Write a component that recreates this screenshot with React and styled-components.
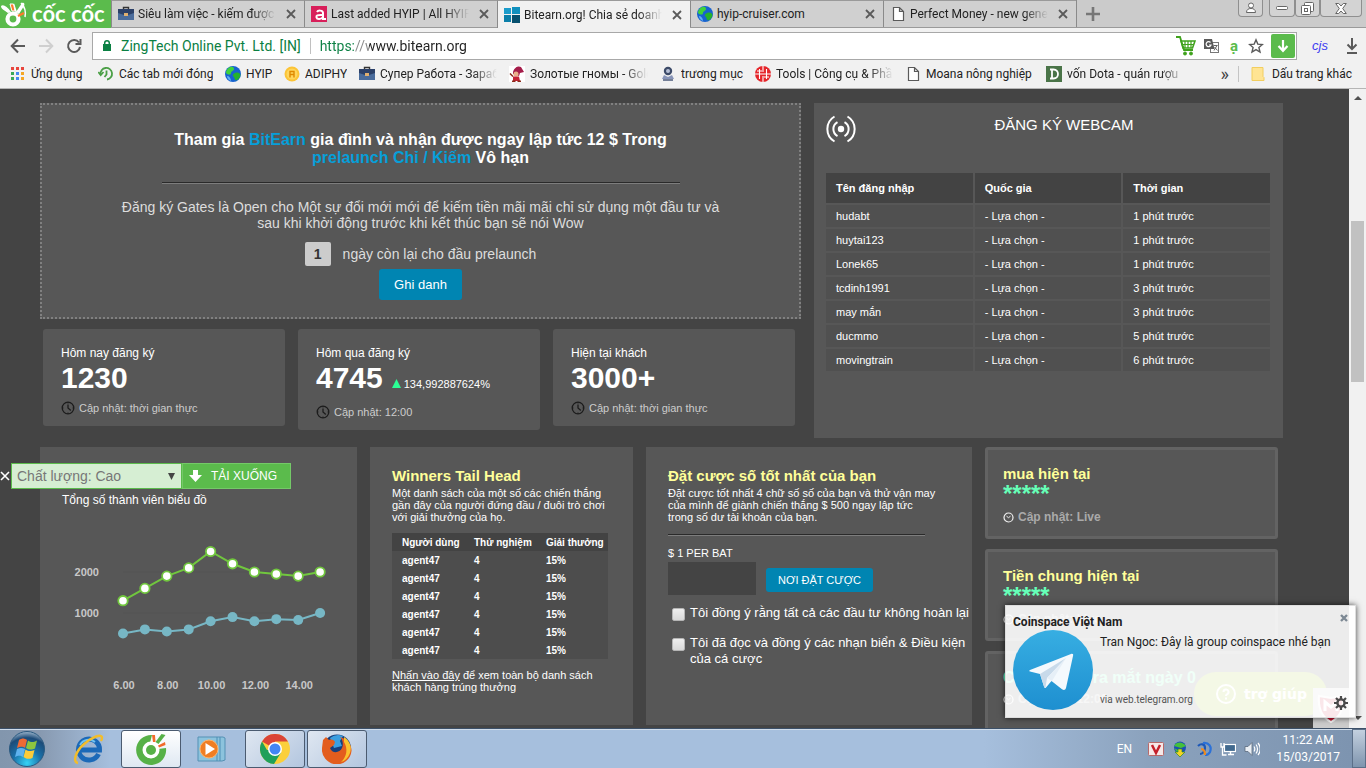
import React from 'react';
import styled, { createGlobalStyle } from 'styled-components';

const registrations = [
  ['hudabt', '1 phút trước'],
  ['huytai123', '1 phút trước'],
  ['Lonek65', '1 phút trước'],
  ['tcdinh1991', '3 phút trước'],
  ['may mắn', '3 phút trước'],
  ['ducmmo', '5 phút trước'],
  ['movingtrain', '6 phút trước'],
];

const winners = ['w1', 'w2', 'w3', 'w4', 'w5', 'w6'];

const totals = [1300, 1600, 1900, 2100, 2500, 2200, 2000, 1950, 1900, 2000];
const actives = [500, 600, 550, 600, 800, 900, 800, 850, 830, 1000];

/* ---------- icons ---------- */

const BriefcaseIcon = () => (
  <svg width="16" height="16" viewBox="0 0 16 16">
    <path d="M5.5 3V1.5h5V3" fill="none" stroke="#333" strokeWidth="1.4" />
    <rect x="0" y="3" width="16" height="11" fill="#4a6c9c" />
    <path d="M0 3h16v4l-6 2H6L0 7z" fill="#2b4068" />
    <rect x="6" y="7" width="4" height="3" fill="#e0b070" />
  </svg>
);

const HyipIcon = () => (
  <svg width="16" height="16" viewBox="0 0 16 16">
    <rect width="16" height="16" fill="#d81f5a" />
    <path d="M6 6c1-2 6-2 6 1v6h3M12 9c-6-.5-7 .8-6.500 2.500C6 13.500 10 13.500 12 11" fill="none" stroke="#fff" strokeWidth="2" />
  </svg>
);

const TilesIcon = () => (
  <svg width="16" height="16" viewBox="0 0 16 16">
    <path d="M0 1h7v6H0z" fill="#1b9ccb" />
    <path d="M8 0h8v7H8z" fill="#0f8fbd" />
    <path d="M0 8h7v7H0z" fill="#0b7fa9" />
    <path d="M8 8h8v8H8z" fill="#07506e" />
  </svg>
);

const GlobeIcon = () => (
  <svg width="16" height="16" viewBox="0 0 16 16">
    <circle cx="8" cy="8" r="8" fill="#1763d0" />
    <path d="M4 1.500C7 0 9 1 9 3S6 5 6 7s-3 2-5 0c0-2 1-4 3-5.500z" fill="#3fd23b" />
    <path d="M10 7c3-1 5 0 5.500 2-.5 3-2.500 5-4.500 5.500-2-1-1-3-2.500-4S8 8 10 7z" fill="#25b22c" />
    <path d="M2 10c2 0 4 2 4 5-2-.6-4-2.500-4-5z" fill="#5fb0f5" />
  </svg>
);

const PageIcon = () => (
  <svg width="16" height="16" viewBox="0 0 16 16">
    <path d="M3.500 1.500h6l4 4v9h-10zM9.500 1.500v4h4" fill="#fff" stroke="#5a5a5a" strokeWidth="1.200" />
  </svg>
);

const AppsIcon = () => (
  <svg width="16" height="16" viewBox="0 0 16 16">
    {['#e8453c', '#e8453c', '#e8453c', '#3aa757', '#4688f1', '#f5a623', '#3aa757', '#4688f1', '#f5a623'].map((c, i) => (
      <rect key={i} x={1 + (i % 3) * 5} y={1 + Math.floor(i / 3) * 5} width="3" height="3" fill={c} />
    ))}
  </svg>
);

const RecentIcon = () => (
  <svg width="16" height="16" viewBox="0 0 16 16" fill="none" stroke="#4a9f45" strokeWidth="1.800">
    <path d="M2.500 8.500A5.800 5.800 0 1 1 9 13.500" />
    <path d="M.3 6l2.400 3L5.500 6M8.500 4.500v4l-2 2.500" />
  </svg>
);

const CoinIcon = () => (
  <svg width="16" height="16" viewBox="0 0 16 16">
    <circle cx="8" cy="8" r="7.500" fill="#fcc436" />
    <circle cx="8" cy="8" r="5.500" fill="#ffd65c" />
    <path d="M6 11.500V5.500h4v6M6 8.500h4" fill="none" stroke="#e08a00" strokeWidth="1.400" />
  </svg>
);

const GnomeIcon = () => (
  <svg width="16" height="16" viewBox="0 0 16 16">
    <rect width="16" height="16" fill="#fff" />
    <path d="M4 6C6 0 10 0 12 1l3 5-4 1-1 3-6-2z" fill="#a51d4a" />
    <circle cx="7" cy="8" r="2.500" fill="#e9b08a" />
    <path d="M4 10.500h6l1 4.500H4z" fill="#c62336" />
    <path d="M1 7.500l3 3M3 15.200h3.500M8.500 15.200H12" stroke="#8a2a1a" strokeWidth="1.500" />
  </svg>
);

const StampIcon = () => (
  <svg width="16" height="16" viewBox="0 0 16 16">
    <circle cx="8" cy="5" r="4.200" fill="#3c4a68" />
    <circle cx="8" cy="5" r="2" fill="#b8c1d6" />
    <path d="M4 9l4 2 4-2 2 4H2z" fill="#8794b8" />
    <path d="M3 14h10" stroke="#4a5878" strokeWidth="1.500" />
  </svg>
);

const ToolsIcon = () => (
  <svg width="16" height="16" viewBox="0 0 16 16">
    <circle cx="8" cy="8" r="8" fill="#e5252a" />
    <path d="M0 8h16M8 0v6M8 10v6M4.500 3v10M11.500 3v10M2 5h5M9 11h5" stroke="#fff" strokeWidth="1.100" />
  </svg>
);

const DotaIcon = () => (
  <svg width="16" height="16" viewBox="0 0 16 16">
    <rect width="16" height="16" fill="#4a7448" />
    <path d="M4 3.500h3.500c6 0 6 9 0 9H4M6 3.500v9" fill="none" stroke="#fff" strokeWidth="1.800" />
  </svg>
);

const FolderIcon = () => (
  <svg width="14" height="16" viewBox="0 0 14 16">
    <path d="M1 1.500h11v9l1 1v3H1z" fill="#ffe493" stroke="#f2ce5f" />
  </svg>
);

const CocCocMark = () => (
  <svg width="28" height="28" viewBox="0 0 28 28">
    <path d="M13.500 4l3 9M21 3c4 4 5 9 4 14" stroke="#fff" strokeWidth="1.500" fill="none" />
    <circle cx="13" cy="19" r="5.500" fill="none" stroke="#fff" strokeWidth="4.200" />
    <path d="M8 13C4 10 1 9 1 6c2-2 6 0 10 6" fill="#fff" />
    <path d="M12 11L10 4l3.500 0 1.500 7z" fill="#ff7a2a" stroke="#fff" />
    <path d="M16 12l6-9c2-1 3 1 2 3l-5 8" fill="#fff" />
    <path d="M18 16l6-3" stroke="#ff7a2a" strokeWidth="2.200" />
  </svg>
);

const NavIcon = ({ d, color = '#5a5a5a' }) => (
  <svg width="16" height="16" viewBox="0 0 16 16" fill="none" stroke={color} strokeWidth="2">
    <path d={d} />
  </svg>
);

const LockIcon = () => (
  <svg width="10" height="14" viewBox="0 0 10 14">
    <rect x="1" y="5" width="8" height="7" fill="#0b8043" />
    <path d="M2.700 6V4a2.300 2.300 0 0 1 4.600 0v2" fill="none" stroke="#0b8043" strokeWidth="1.500" />
  </svg>
);

const CartIcon = () => (
  <svg width="20" height="20" viewBox="0 0 20 20" fill="none" stroke="#3fa21c">
    <path d="M0 1h4l4 13h9" strokeWidth="1.800" />
    <path d="M5 5h14l-2.500 7H7z" strokeWidth="1.600" />
    <path d="M6 8.500h12M9 5v7M12 5v7M15 5v7" strokeWidth="1.200" />
    <circle cx="9" cy="17.500" r="1.500" fill="#3fa21c" />
    <circle cx="15" cy="17.500" r="1.500" fill="#3fa21c" />
  </svg>
);

const TranslateIcon = () => (
  <svg width="16" height="16" viewBox="0 0 16 16">
    <rect x="6.500" y="4.500" width="8" height="10" fill="#fff" stroke="#777" />
    <path d="M0 1h8l2.500 10H0z" fill="#5a5a5a" />
    <path d="M6.500 4.500A2.500 2.500 0 1 0 7 7H5" fill="none" stroke="#fff" strokeWidth="1.200" />
    <path d="M9.500 7.500h4M10 12.500l3-5M10.500 9l3 3.500" stroke="#666" fill="none" />
  </svg>
);

const StarIcon = () => (
  <svg width="16" height="16" viewBox="0 0 16 16">
    <path d="M8 1.800l1.800 4.300 4.600.4-3.500 3 1.100 4.600-4-2.500-4 2.500 1.100-4.600-3.500-3 4.600-.4z" fill="none" stroke="#5a5a5a" strokeWidth="1.400" />
  </svg>
);

const DownArrow = ({ size = 14, color = '#fff' }) => (
  <svg width={size} height={size} viewBox="0 0 14 14">
    <path d="M7 1v10M2.500 7L7 11.800 11.500 7" fill="none" stroke={color} strokeWidth="2.200" />
  </svg>
);

const BroadcastIcon = () => (
  <svg width="30" height="28" viewBox="0 0 30 28" fill="none" stroke="#fff" strokeWidth="2">
    <circle cx="15" cy="14" r="3.200" fill="#fff" stroke="none" />
    <path d="M11.500 7a8 8 0 0 0 0 14M18.500 7a8 8 0 0 1 0 14" />
    <path d="M8.500 1.500a14.500 14.500 0 0 0 0 25M21.500 1.500a14.500 14.500 0 0 1 0 25" />
  </svg>
);

const ClockIcon = () => (
  <svg width="14" height="14" viewBox="0 0 14 14" fill="none" stroke="#1c1c1c">
    <circle cx="7" cy="7" r="5.800" strokeWidth="1.300" />
    <path d="M7 3.500V7l2.800 2.500" strokeWidth="1.300" />
    <path d="M7 1v1.500M7 11.500V13M1 7h1.500M11.500 7H13" />
  </svg>
);

const SmallClock = () => (
  <svg width="11" height="11" viewBox="0 0 11 11" fill="none" stroke="#f2f2f2">
    <circle cx="5.500" cy="5.500" r="4.500" strokeWidth="1.200" />
    <path d="M3.500 4.200l2 1.500 2-1.500" />
  </svg>
);

const TelegramIcon = () => (
  <svg width="80" height="80" viewBox="0 0 80 80">
    <defs>
      <linearGradient id="tg" x1="0" y1="0" x2="0" y2="1">
        <stop offset="0" stopColor="#37aee2" />
        <stop offset="1" stopColor="#1e8fd0" />
      </linearGradient>
    </defs>
    <circle cx="40" cy="40" r="40" fill="url(#tg)" />
    <path d="M17 40l41-16c2-.5 2.500.5 2 2l-7 32c-.6 2-2 2.400-4 1.300L38.500 51 33 57.500c-1 1-1.500.5-2-1l-4-12.500-10-2.500c-1-.5-1-1 0-1.500z" fill="#f4f9fd" />
    <path d="M27 44l26-16-19 20-1.500 9.500c-.8.300-1.200-.3-1.500-1z" fill="#c8daea" />
    <path d="M34 48l19-20-14 23z" fill="#e6eff7" />
  </svg>
);

const GearIcon = () => (
  <svg width="14" height="14" viewBox="0 0 14 14" stroke="#4a4a4a">
    <circle cx="7" cy="7" r="3.600" fill="none" strokeWidth="2.400" />
    <path d="M7 0v3M7 11v3M0 7h3M11 7h3M2 2l2 2M10 10l2 2M12 2l-2 2M4 10l-2 2" strokeWidth="2.200" />
  </svg>
);

const ShieldIcon = () => (
  <svg width="28" height="30" viewBox="0 0 28 30">
    <path d="M2 3l12 2 12-2c1 12-3 21-12 26C5 24 1 15 2 3z" fill="#c8102e" stroke="#f5f5f5" strokeWidth="2" />
    <path d="M8 18V9l6 5 6-5v9" fill="none" stroke="#fff" strokeWidth="3" />
  </svg>
);

const StartOrb = () => (
  <svg width="36" height="36" viewBox="0 0 36 36">
    <defs>
      <radialGradient id="orb" cx="0.5" cy="0.9" r="0.9">
        <stop offset="0" stopColor="#35d3f5" />
        <stop offset="0.45" stopColor="#1a70a8" />
        <stop offset="0.8" stopColor="#1c4b78" />
        <stop offset="1" stopColor="#9db6cc" />
      </radialGradient>
    </defs>
    <circle cx="18" cy="18" r="17.500" fill="url(#orb)" stroke="#2b5a80" />
    <path d="M10 9c3-2 5-2 8 0l-2 8c-3-2-5-1-8 0z" fill="#ee6a35" />
    <path d="M19 9.500c3 2 5 2 9 0l-2 8c-4 2-6 1-9-.5z" fill="#8cc540" />
    <path d="M8 18c3-1.500 5-1.500 8 0l-2 8c-3-2-5-1.500-8 0z" fill="#5fb2ee" />
    <path d="M16.500 18.500c3 2 5 2 9 .5l-2 8c-4 1.500-6 1-9-1z" fill="#fccc3a" />
  </svg>
);

const IeIcon = () => (
  <svg width="32" height="32" viewBox="0 0 32 32" fill="none">
    <path d="M26.500 21A10.500 10.500 0 1 1 27.500 17H9" stroke="#1c69b8" strokeWidth="5" />
    <path d="M8 12a10 10 0 0 1 15-3" stroke="#6fc2f2" strokeWidth="2" />
    <path d="M6 30C0 29 4 18 12 11S30 0 30 5c0 1-.5 2-1 3" stroke="#f2bd2b" strokeWidth="2.400" />
  </svg>
);

const CocCocIcon = () => (
  <svg width="32" height="32" viewBox="0 0 32 32">
    <path d="M17 2A15 15 0 1 0 31 15l-8 1a7.500 7.500 0 1 1-8-6z" fill="#57b147" />
    <circle cx="16" cy="17" r="8.500" fill="#fff" />
    <path d="M16 17L26 6v8z" fill="#fff" />
    <circle cx="16" cy="17" r="5" fill="#57b147" />
    <path d="M20.500 9l6-8 4 1-7 9z" fill="#57b147" />
    <path d="M18 9l-1-7 3 0 .5 7zM23 12.500l7-3.500.5 3-6.500 2.500z" fill="#f26a2a" />
  </svg>
);

const PlayerIcon = () => (
  <svg width="32" height="28" viewBox="0 0 32 28">
    <path d="M1 2h25l2 1v22l-3 1H1z" fill="#8cc3dd" stroke="#5591b4" />
    <path d="M20 2v24M23 2v24" stroke="#4e8fb5" />
    <circle cx="12" cy="14" r="9" fill="#f07e23" stroke="#ffb46a" />
    <path d="M8.500 8l9.500 6-9.500 6z" fill="#fff" />
  </svg>
);

const ChromeIcon = () => (
  <svg width="30" height="30" viewBox="0 0 30 30">
    <circle cx="15" cy="15" r="15" fill="#fbcf3b" />
    <path d="M15 15L2 7.500A15 15 0 0 1 28 7.500H15z" fill="#da4437" />
    <path d="M2 7.500A15 15 0 0 0 14 30l7-11.500-6-3.500L7 16z" fill="#1fa05a" />
    <circle cx="15" cy="15" r="7" fill="#fff" />
    <circle cx="15" cy="15" r="5.500" fill="#4285f4" />
  </svg>
);

const FirefoxIcon = () => (
  <svg width="30" height="30" viewBox="0 0 30 30">
    <circle cx="15" cy="14.500" r="14" fill="#173f7d" />
    <path d="M8 4a13 13 0 0 1 13-2l-3 5 2 5-8 2z" fill="#3b9fe0" />
    <path d="M1 6l3-3 3 3c3-1 5 0 6 2l-1 3-4 3c2 6 10 5 12 0 2-5 0-9-2-11 8 2 12 9 11.500 14A14.500 14.500 0 0 1 0 14z" fill="#e35d1e" />
    <path d="M22 3c6 4 8 10 6 16-2 5-5 8-9 9 6-5 7-14 3-20z" fill="#fbc22e" />
  </svg>
);

const V3Icon = () => (
  <svg width="16" height="16" viewBox="0 0 16 16">
    <rect x="0.500" y="1.500" width="15" height="13" rx="1" fill="#f6e8e8" stroke="#b86a6a" />
    <path d="M4 4l4 8 4-8" fill="none" stroke="#c4202b" strokeWidth="2.500" />
  </svg>
);

const IdmIcon = () => (
  <svg width="16" height="16" viewBox="0 0 16 16">
    <circle cx="8" cy="6.500" r="6" fill="#1b4fb8" />
    <path d="M2 5c3-5 9-4 12 0l-5 2zM2 7l6 3-3 1z" fill="#44c03c" />
    <path d="M6 8h4v3h3l-5 5-5-5h3z" fill="#f3d324" stroke="#2c8a2c" strokeWidth="0.700" />
  </svg>
);

const SwirlIcon = () => (
  <svg width="16" height="16" viewBox="0 0 16 16" fill="none" strokeWidth="2.200">
    <path d="M2 5c3-3 7-2 7 2s-3 6-5 6" stroke="#1d58b8" />
    <path d="M7 2c6-1 9 4 7 9-1 2-3 3-5 3" stroke="#2b71d8" />
    <path d="M5 8c3 0 4 2 4 6" stroke="#ee8a1d" />
  </svg>
);

const NetworkIcon = () => (
  <svg width="16" height="16" viewBox="0 0 16 16">
    <rect x="4.500" y="3.500" width="11" height="7" fill="#41698e" stroke="#fff" strokeWidth="1.200" />
    <path d="M8 13.500h6M10.500 11v2" stroke="#fff" strokeWidth="1.400" />
    <path d="M1 2v4h3V2M2.500 6v8h4" fill="none" stroke="#fff" strokeWidth="1.300" />
  </svg>
);

const SpeakerIcon = () => (
  <svg width="16" height="16" viewBox="0 0 16 16" fill="none" stroke="#fff">
    <path d="M1 5.500h3l4-4v13l-4-4H1z" fill="#e9eef4" stroke="#5a6a7c" strokeWidth="0.800" />
    <path d="M10 5.500c1 1.500 1 3.500 0 5M12 3.500c2 2.500 2 6.500 0 9M14 2c3 3.500 3 8.500 0 12" strokeWidth="1.200" />
  </svg>
);

/* ---------- chart ---------- */

const px = (i) => 83 + i * 21.9;
const py = (v) => 134 - v * 0.041;

const MembersChart = () => (
  <svg width="295" height="180" viewBox="0 0 295 180">
    <path d="M83 52h197M83 93h197" stroke="#545454" />
    <polyline points={totals.map((v, i) => `${px(i)},${py(v)}`).join(' ')} fill="none" stroke="#71c73e" strokeWidth="2" />
    <polyline points={actives.map((v, i) => `${px(i)},${py(v)}`).join(' ')} fill="none" stroke="#77b7c5" strokeWidth="2" />
    {totals.map((v, i) => (
      <circle key={i} cx={px(i)} cy={py(v)} r="4.700" fill="#fff" stroke="#71c73e" strokeWidth="1.800" />
    ))}
    {actives.map((v, i) => (
      <circle key={i} cx={px(i)} cy={py(v)} r="5" fill="#77b7c5" />
    ))}
    <ChartLabel x="59" y="56" textAnchor="end">2000</ChartLabel>
    <ChartLabel x="59" y="97" textAnchor="end">1000</ChartLabel>
    {['6.00', '8.00', '10.00', '12.00', '14.00'].map((t, i) => (
      <ChartLabel key={t} x={84 + i * 43.8} y="169" textAnchor="middle">{t}</ChartLabel>
    ))}
  </svg>
);

/* ---------- page ---------- */

const tabs = [
  { title: 'Siêu làm việc - kiếm được tiền', icon: <BriefcaseIcon /> },
  { title: 'Last added HYIP | All HYIP Monitors', icon: <HyipIcon /> },
  { title: 'Bitearn.org! Chia sẻ doanh thu', icon: <TilesIcon />, active: true },
  { title: 'hyip-cruiser.com', icon: <GlobeIcon /> },
  { title: 'Perfect Money - new generation', icon: <PageIcon /> },
];

const bookmarks = [
  { title: 'Ứng dụng', icon: <AppsIcon />, w: 88 },
  { title: 'Các tab mới đóng', icon: <RecentIcon />, w: 127 },
  { title: 'HYIP', icon: <GlobeIcon />, w: 59 },
  { title: 'ADIPHY', icon: <CoinIcon />, w: 75 },
  { title: 'Супер Работа - Заработок', icon: <BriefcaseIcon />, w: 150, fade: true },
  { title: 'Золотые гномы - Gold', icon: <GnomeIcon />, w: 151, fade: true },
  { title: 'trương mục', icon: <StampIcon />, w: 95 },
  { title: 'Tools | Công cụ & Phần', icon: <ToolsIcon />, w: 150, fade: true },
  { title: 'Moana nông nghiệp', icon: <PageIcon />, w: 141 },
  { title: 'vốn Dota - quán rượu', icon: <DotaIcon />, w: 151, fade: true },
];

const Browser = () => (
  <header>
    <TabStrip>
      <Brand>
        <CocCocMark />
        <span>cốc cốc</span>
      </Brand>
      {tabs.map((t) => (
        <Tab key={t.title} $active={t.active}>
          {t.icon}
          <FadeText $fade={t.title.length > 16}>{t.title}</FadeText>
          <TabClose aria-label="Close tab">
            <svg width="10" height="10" viewBox="0 0 10 10">
              <path d="M1 1l8 8M9 1L1 9" stroke="#5a5a5a" strokeWidth="1.800" />
            </svg>
          </TabClose>
        </Tab>
      ))}
      <NewTab aria-label="New tab">
        <svg width="14" height="14" viewBox="0 0 14 14">
          <path d="M7 0v14M0 7h14" stroke="#777" strokeWidth="2.600" />
        </svg>
      </NewTab>
      <WindowButtons>
        <WindowButton $w={25} $alone aria-label="Profile">
          <svg width="12" height="12" viewBox="0 0 12 12" fill="#fff" stroke="#666">
            <path d="M1.500 10.500c0-3 2-4 4.500-4s4.500 1 4.500 4z" />
            <circle cx="6" cy="3.500" r="2.500" />
          </svg>
        </WindowButton>
        <WindowButton $w={26} aria-label="Minimize">
          <svg width="12" height="5" viewBox="0 0 12 5">
            <rect x="0.500" y="0.500" width="11" height="3" rx="1" fill="#fff" stroke="#666" />
          </svg>
        </WindowButton>
        <WindowButton $w={25} aria-label="Restore">
          <svg width="13" height="13" viewBox="0 0 13 13" fill="#fff" stroke="#666">
            <rect x="3.500" y="0.500" width="9" height="9" rx="1" />
            <rect x="0.500" y="3.500" width="9" height="9" rx="1" />
            <rect x="3.500" y="6.500" width="3" height="3" />
          </svg>
        </WindowButton>
        <WindowButton $w={42} aria-label="Close">
          <svg width="12" height="11" viewBox="0 0 12 11" fill="#fff" stroke="#666">
            <path d="M.7.500h3L6 3 8.300.500h3L7.700 5.500l3.600 5h-3L6 8l-2.300 2.500h-3l3.600-5z" />
          </svg>
        </WindowButton>
      </WindowButtons>
    </TabStrip>
    <Toolbar>
      <IconButton aria-label="Back"><NavIcon d="M15 8H2M8 1.500L1.700 8 8 14.500" /></IconButton>
      <IconButton aria-label="Forward"><NavIcon color="#cfcfcf" d="M1 8h13M8 1.500L14.300 8 8 14.500" /></IconButton>
      <IconButton aria-label="Reload"><NavIcon d="M13 4.500A6 6 0 1 0 14 9M14.500 1v5h-5" /></IconButton>
      <Omnibox>
        <LockIcon />
        <Issuer>ZingTech Online Pvt. Ltd. [IN]</Issuer>
        <Url aria-label="Address" defaultValue="https://www.bitearn.org" />
        <OmniIcons>
          <CartIcon />
          <TranslateIcon />
          <Accent>ạ</Accent>
          <StarIcon />
        </OmniIcons>
        <SaveButton aria-label="Save"><DownArrow /></SaveButton>
      </Omnibox>
      <Cjs>cjs</Cjs>
      <IconButton aria-label="Downloads">
        <svg width="14" height="16" viewBox="0 0 14 16">
          <path d="M7 0v11M2.500 6.500L7 11l4.500-4.500M2 15h10" fill="none" stroke="#5a5a5a" strokeWidth="2" />
        </svg>
      </IconButton>
    </Toolbar>
    <BookmarkBar>
      {bookmarks.map((b) => (
        <Bookmark key={b.title} href="#" $w={b.w}>
          {b.icon}
          <FadeText $fade={b.fade}>{b.title}</FadeText>
        </Bookmark>
      ))}
      <More>»</More>
      <OtherBookmarks href="#">
        <FolderIcon />
        Dấu trang khác
      </OtherBookmarks>
    </BookmarkBar>
  </header>
);

const Stat = ({ label, value, change, update }) => (
  <StatCard>
    <StatLabel>{label}</StatLabel>
    <StatValue>
      {value}
      {change && (
        <Change>
          <svg width="9" height="9" viewBox="0 0 9 9">
            <path d="M4.500 0L9 9H0z" fill="#2bff94" />
          </svg>
          {change}
        </Change>
      )}
    </StatValue>
    <Updated $low={Boolean(change)}>
      <ClockIcon />
      Cập nhật: {update}
    </Updated>
  </StatCard>
);

const Taskbar = () => (
  <TaskbarRow>
    <TaskButton $w={54} aria-label="Start"><StartOrb /></TaskButton>
    <TaskButton $w={67} aria-label="Internet Explorer"><IeIcon /></TaskButton>
    <TaskButton $w={60} $open="active" aria-label="Cốc Cốc"><CocCocIcon /></TaskButton>
    <TaskButton $w={64} aria-label="Media Player"><PlayerIcon /></TaskButton>
    <TaskButton $w={60} $open="idle" aria-label="Chrome"><ChromeIcon /></TaskButton>
    <TaskButton $w={60} $open="idle" $gap aria-label="Firefox"><FirefoxIcon /></TaskButton>
    <Tray>
      <span>EN</span>
      <TrayIcons>
        <V3Icon />
        <IdmIcon />
        <SwirlIcon />
        <NetworkIcon />
        <SpeakerIcon />
      </TrayIcons>
      <DateTime>
        <time>11:22 AM</time>
        <time>15/03/2017</time>
      </DateTime>
      <ShowDesktop aria-label="Show desktop" />
    </Tray>
  </TaskbarRow>
);

const App = () => {
  return (
    <>
      <GlobalStyle />
      <Screen>
        <Browser />
        <Viewport>
          <Page>
            <TopRow>
              <div>
                <Hero>
                  <HeroTitle>
                    Tham gia <em>BitEarn</em> gia đình và nhận được ngay lập tức 12 $ Trong
                    <br />
                    <em>prelaunch Chỉ / Kiếm</em> Vô hạn
                  </HeroTitle>
                  <HeroRule />
                  <HeroText>
                    Đăng ký Gates là Open cho Một sự đổi mới mới để kiếm tiền mãi mãi chỉ sử dụng một đầu tư và
                    <br />
                    sau khi khởi động trước khi kết thúc bạn sẽ nói Wow
                  </HeroText>
                  <Countdown>
                    <Days>1</Days>
                    ngày còn lại cho đầu prelaunch
                  </Countdown>
                  <BlueButton $large>Ghi danh</BlueButton>
                </Hero>
                <Stats>
                  <Stat label="Hôm nay đăng ký" value="1230" update="thời gian thực" />
                  <Stat label="Hôm qua đăng ký" value="4745" change="134,992887624%" update="12:00" />
                  <Stat label="Hiện tại khách" value="3000+" update="thời gian thực" />
                </Stats>
              </div>
              <Webcam>
                <WebcamHead>
                  <BroadcastIcon />
                  <h2>ĐĂNG KÝ WEBCAM</h2>
                </WebcamHead>
                <SignupTable>
                  <thead>
                    <tr>
                      <th>Tên đăng nhập</th>
                      <th>Quốc gia</th>
                      <th>Thời gian</th>
                    </tr>
                  </thead>
                  <tbody>
                    {registrations.map(([name, time]) => (
                      <tr key={name}>
                        <td>{name}</td>
                        <td>- Lựa chọn -</td>
                        <td>{time}</td>
                      </tr>
                    ))}
                  </tbody>
                </SignupTable>
              </Webcam>
            </TopRow>

            <BottomRow>
              <ChartPanel>
                <h3>Tổng số thành viên biểu đồ</h3>
                <MembersChart />
              </ChartPanel>

              <Panel>
                <PanelTitle>Winners Tail Head</PanelTitle>
                <PanelText>
                  Một danh sách của một số các chiến thắng
                  <br />
                  gần đây của người đứng đầu / đuôi trò chơi
                  <br />
                  với giải thưởng của họ.
                </PanelText>
                <WinnersTable>
                  <thead>
                    <tr>
                      <th>Người dùng</th>
                      <th>Thử nghiệm</th>
                      <th>Giải thưởng</th>
                    </tr>
                  </thead>
                  <tbody>
                    {winners.map((w) => (
                      <tr key={w}>
                        <td>agent47</td>
                        <td>4</td>
                        <td>15%</td>
                      </tr>
                    ))}
                  </tbody>
                </WinnersTable>
                <PanelText>
                  <a href="#">Nhấn vào đây</a> để xem toàn bộ danh sách
                  <br />
                  khách hàng trúng thưởng
                </PanelText>
              </Panel>

              <Panel>
                <PanelTitle>Đặt cược số tốt nhất của bạn</PanelTitle>
                <PanelText>
                  Đặt cược tốt nhất 4 chữ số số của bạn và thử vận may
                  <br />
                  của mình để giành chiến thắng $ 500 ngay lập tức
                  <br />
                  trong số dư tài khoản của bạn.
                </PanelText>
                <BetRule />
                <BetLabel htmlFor="bet">$ 1 PER BAT</BetLabel>
                <BetRow>
                  <BetInput id="bet" type="text" />
                  <BlueButton>NƠI ĐẶT CƯỢC</BlueButton>
                </BetRow>
                <Agree>
                  <input type="checkbox" />
                  <span>Tôi đồng ý rằng tất cả các đầu tư không hoàn lại</span>
                </Agree>
                <Agree>
                  <input type="checkbox" />
                  <span>
                    Tôi đã đọc và đồng ý các nhạn biển & Điều kiện
                    <br />
                    của cá cược
                  </span>
                </Agree>
              </Panel>

              <LiveCards>
                <LiveCard>
                  <PanelTitle>mua hiện tại</PanelTitle>
                  <Stars>*****</Stars>
                  <LiveUpdate><SmallClock />Cập nhật: Live</LiveUpdate>
                </LiveCard>
                <LiveCard>
                  <PanelTitle>Tiền chung hiện tại</PanelTitle>
                  <Stars>*****</Stars>
                  <LiveUpdate><SmallClock />Cập nhật: Live</LiveUpdate>
                </LiveCard>
                <LiveCard>
                  <LaunchTitle>Chính thức ra mắt ngày 0</LaunchTitle>
                  <LiveUpdate $tight><SmallClock />Cập nhật: 12:00</LiveUpdate>
                </LiveCard>
              </LiveCards>
            </BottomRow>
          </Page>

          <Scrollbar>
            <ScrollArrow />
            <ScrollThumb />
            <ScrollArrow $down />
          </Scrollbar>

          <DownloadBar>
            <BarClose aria-label="Close">
              <svg width="10" height="10" viewBox="0 0 10 10">
                <path d="M1 1l8 8M9 1L1 9" stroke="#fff" strokeWidth="1.600" />
              </svg>
            </BarClose>
            <Quality>
              <select aria-label="Chất lượng">
                <option>Chất lượng: Cao</option>
              </select>
              <svg width="7" height="7" viewBox="0 0 7 7">
                <path d="M0 0h7L3.500 7z" fill="#444" />
              </svg>
            </Quality>
            <DownloadButton>
              <svg width="13" height="12" viewBox="0 0 13 12">
                <path d="M4 0h5v5h4l-6.500 7L0 5h4z" fill="#fff" />
              </svg>
              TẢI XUỐNG
            </DownloadButton>
          </DownloadBar>

          <HelpButton>
            <svg width="20" height="20" viewBox="0 0 20 20" fill="none" stroke="#fff" strokeWidth="2">
              <circle cx="10" cy="10" r="9" />
              <path d="M7.500 8a2.500 2.500 0 1 1 3.500 2.300c-.8.400-1 .8-1 1.700M10 13.500v2" />
            </svg>
            trợ giúp
          </HelpButton>
          <Shield><ShieldIcon /></Shield>

          <Toast>
            <ToastTitle>Coinspace Việt Nam</ToastTitle>
            <ToastBody>
              <TelegramIcon />
              <ToastText>
                <p>Tran Ngoc: Đây là group coinspace nhé bạn</p>
                <small>via web.telegram.org</small>
              </ToastText>
            </ToastBody>
            <ToastClose aria-label="Close">
              <svg width="8" height="8" viewBox="0 0 8 8">
                <path d="M1 1l6 6M7 1L1 7" stroke="#7d8994" strokeWidth="2.400" />
              </svg>
            </ToastClose>
            <ToastSettings aria-label="Settings"><GearIcon /></ToastSettings>
          </Toast>
        </Viewport>
        <Taskbar />
      </Screen>
    </>
  );
};

export default App;

const GlobalStyle = createGlobalStyle`
  * {
    box-sizing: border-box;
  }
  body {
    margin: 0;
    overflow: hidden;
    font-family: 'Liberation Sans', Arial, sans-serif;
  }
  h1, h2, h3, p {
    margin: 0;
    font-weight: normal;
  }
  button {
    border: 0;
    padding: 0;
    background: none;
    font-family: inherit;
  }
  svg {
    display: block;
    flex-shrink: 0;
  }
`;

const Screen = styled.div`
  display: grid;
  grid-template-rows: auto 1fr auto;
  height: 100vh;
`;

const uiFont = `Roboto, 'Open Sans', sans-serif`;

const TabStrip = styled.div`
  display: flex;
  height: 28px;
  background: #cbcbcb;
  border-bottom: 1px solid #9a9a9a;
  font: 12px ${uiFont};
`;

const Brand = styled.div`
  display: flex;
  align-items: center;
  gap: 4px;
  width: 111px;
  height: 28px;
  background: #5bbb4c;
  color: #fff;
  font: bold 22px/28px 'Lato', sans-serif;
  white-space: nowrap;
`;

const Tab = styled.div`
  display: flex;
  align-items: center;
  gap: 4px;
  width: 193px;
  height: ${(props) => (props.$active ? '28px' : '27px')};
  padding: 0 8px 0 6px;
  border-top: 1px solid #9a9a9a;
  border-left: 1px solid #8a8a8a;
  background: ${(props) => (props.$active ? '#f1f1f1' : '#d0d0d0')};
  color: #222;
`;

const FadeText = styled.span`
  flex: 1;
  overflow: hidden;
  white-space: nowrap;
  mask-image: ${(props) => (props.$fade ? 'linear-gradient(to left, transparent, #000 24px)' : 'none')};
`;

const TabClose = styled.button`
  margin-left: 6px;
`;

const NewTab = styled.button`
  padding: 0 9px;
  border-left: 1px solid #8a8a8a;
`;

const WindowButtons = styled.div`
  display: flex;
  align-items: flex-start;
  margin-left: auto;
  margin-right: 4px;
`;

const WindowButton = styled.button`
  display: flex;
  align-items: center;
  justify-content: center;
  width: ${(props) => props.$w}px;
  height: 17px;
  margin-right: ${(props) => (props.$alone ? '6px' : '0')};
  border: 1px solid #8f8f8f;
  border-top: 0;
  border-radius: 0 0 4px 4px;
  background: #d3d3d3;
`;

const Toolbar = styled.div`
  display: flex;
  align-items: center;
  gap: 12px;
  height: 35px;
  padding: 0 7px 0 10px;
  background: #f1f1f1;
`;

const IconButton = styled.button`
  display: flex;
`;

const Omnibox = styled.div`
  display: flex;
  flex: 1;
  align-items: center;
  height: 28px;
  margin-left: -2px;
  padding: 0 1px 0 9px;
  border: 1px solid #a8a8a8;
  background: #fff;
  font: 14px ${uiFont};
`;

const Issuer = styled.span`
  margin-left: 9px;
  padding-right: 9px;
  border-right: 1px solid #c0c0c0;
  line-height: 16px;
  color: #0b8043;
`;

const Url = styled.input`
  flex: 1;
  margin-left: 9px;
  padding: 0;
  border: 0;
  outline: 0;
  font: inherit;
  color: transparent;
  background: linear-gradient(to right, #0b8043 34px, #888 34px, #888 49px, #222 49px);
  background-clip: text;
`;

const OmniIcons = styled.div`
  display: flex;
  align-items: center;
  gap: 8px;
  margin-right: 7px;
`;

const Accent = styled.span`
  width: 12px;
  text-align: center;
  font-weight: bold;
  font-size: 15px;
  line-height: 20px;
  color: #5bbb4c;
`;

const SaveButton = styled.button`
  display: flex;
  align-items: center;
  justify-content: center;
  width: 24px;
  height: 24px;
  border-radius: 2px;
  background: #5bbb4c;
`;

const Cjs = styled.span`
  width: 24px;
  padding-left: 3px;
  font: italic 13px 'Liberation Sans', sans-serif;
  color: #3d3df0;
`;

const BookmarkBar = styled.nav`
  display: flex;
  align-items: center;
  height: 26px;
  padding: 0 14px 4px 10px;
  border-bottom: 1px solid #b5b5b5;
  background: #f1f1f1;
  font: 12px ${uiFont};
`;

const Bookmark = styled.a`
  display: flex;
  align-items: center;
  gap: 5px;
  width: ${(props) => props.$w}px;
  padding-right: 12px;
  color: #222;
  text-decoration: none;
`;

const More = styled.span`
  margin-left: auto;
  font-size: 18px;
  line-height: 16px;
  color: #444;
`;

const OtherBookmarks = styled.a`
  display: flex;
  align-items: center;
  gap: 7px;
  margin-left: 9px;
  padding-left: 12px;
  border-left: 1px solid #c4c4c4;
  color: #222;
  text-decoration: none;
  white-space: nowrap;
`;

const Viewport = styled.div`
  position: relative;
  display: flex;
  min-height: 0;
  overflow: hidden;
  background: #444;
`;

const Page = styled.main`
  flex: 1;
  padding: 14px 66px 0 40px;
`;

const TopRow = styled.div`
  display: grid;
  grid-template-columns: 761fr 469fr;
  align-items: start;
  gap: 13px;
`;

const Hero = styled.section`
  display: flex;
  flex-direction: column;
  align-items: center;
  padding: 26px 20px 17px;
  border: 2px dotted #808080;
  background: #575757;
  text-align: center;
`;

const HeroTitle = styled.h1`
  font-size: 16px;
  line-height: 18px;
  font-weight: bold;
  color: #fff;

  em {
    font-style: normal;
    color: #069fd9;
  }
`;

const Rule = styled.hr`
  height: 2px;
  border: 0;
  border-top: 1px solid #2a2a2a;
  border-bottom: 1px solid #7d7d7d;
`;

const HeroRule = styled(Rule)`
  width: 518px;
  margin: 15px 0;
`;

const HeroText = styled.p`
  font-size: 14px;
  line-height: 16px;
  color: #ddd;
`;

const Countdown = styled.div`
  display: flex;
  align-items: center;
  gap: 12px;
  margin-top: 11px;
  font-size: 14px;
  color: #ddd;
`;

const Days = styled.span`
  width: 26px;
  border-radius: 2px;
  background: #ccc;
  line-height: 24px;
  font-weight: bold;
  color: #333;
`;

const BlueButton = styled.button`
  height: ${(props) => (props.$large ? '31px' : '24px')};
  margin-top: 3px;
  padding: ${(props) => (props.$large ? '0 15px' : '0 12px')};
  border-radius: 3px;
  background: #0085b2;
  font-size: ${(props) => (props.$large ? '13px' : '11px')};
  color: #fff;
  white-space: nowrap;
`;

const Stats = styled.div`
  display: grid;
  grid-template-columns: repeat(3, 1fr);
  align-items: start;
  gap: 13px;
  margin: 10px 6px 0 3px;
`;

const StatCard = styled.section`
  padding: 16px 18px 11px;
  border-radius: 3px;
  background: #575757;
`;

const StatLabel = styled.h3`
  font-size: 12px;
  line-height: 16px;
  color: #fff;
`;

const StatValue = styled.p`
  display: flex;
  align-items: baseline;
  font-size: 30px;
  line-height: 34px;
  font-weight: bold;
  color: #fff;
`;

const Change = styled.span`
  display: flex;
  align-items: baseline;
  gap: 3px;
  margin-left: 9px;
  font-size: 11px;
  line-height: 14px;
  font-weight: normal;
`;

const Updated = styled.p`
  display: flex;
  align-items: center;
  gap: 4px;
  margin-top: ${(props) => (props.$low ? '10px' : '6px')};
  font-size: 11px;
  line-height: 14px;
  color: #ccc;
`;

const Webcam = styled.section`
  padding: 12px 11px 65px 12px;
  background: #575757;
`;

const WebcamHead = styled.div`
  display: grid;
  grid-template-columns: 30px 1fr;
  height: 58px;

  h2 {
    font-size: 15px;
    line-height: 20px;
    text-align: center;
    color: #fff;
  }
`;

const SignupTable = styled.table`
  width: 100%;
  table-layout: fixed;
  border-spacing: 0;
  font-size: 11px;
  color: #fff;

  th,
  td {
    height: 24px;
    padding: 0 10px;
    border: solid #575757;
    border-width: 0 2px 2px 0;
    text-align: left;
    background: #505050;
  }

  th {
    height: 32px;
    background: #434343;
  }
`;

const BottomRow = styled.div`
  display: grid;
  grid-template-columns: 317fr 263fr 326fr 298fr;
  align-items: start;
  gap: 13px;
  margin-top: 9px;
`;

const Panel = styled.section`
  min-height: 278px;
  padding: 20px 0 0 22px;
  overflow: hidden;
  background: #575757;
`;

const ChartPanel = styled(Panel)`
  padding-top: 45px;
  padding-left: 0;

  h3 {
    padding-left: 22px;
    font-size: 12px;
    line-height: 16px;
    color: #fff;
  }

  svg {
    margin-top: 12px;
  }
`;

const ChartLabel = styled.text`
  font-size: 11px;
  font-weight: bold;
  fill: #c8c8c8;
`;

const PanelTitle = styled.h2`
  font-size: 15px;
  line-height: 18px;
  font-weight: bold;
  color: #ff9;
  white-space: nowrap;
`;

const PanelText = styled.p`
  padding-top: 2px;
  font-size: 11px;
  line-height: 12px;
  color: #fff;
  white-space: nowrap;

  a {
    color: #fff;
  }
`;

const WinnersTable = styled.table`
  width: 216px;
  table-layout: fixed;
  margin: 10px 0 8px;
  border-spacing: 0;
  background: #4d4d4d;
  font-size: 10px;
  font-weight: bold;
  color: #fff;

  th,
  td {
    height: 18px;
    padding: 0 0 0 10px;
    text-align: left;
    white-space: nowrap;
  }

  th {
    background: #434343;
  }
`;

const BetRule = styled(Rule)`
  width: 257px;
  margin: 11px 0 10px;
`;

const BetLabel = styled.label`
  display: block;
  font-size: 11px;
  line-height: 14px;
  color: #fff;
`;

const BetRow = styled.div`
  display: flex;
  align-items: center;
  gap: 10px;
  margin: 2px 0 10px;
`;

const BetInput = styled.input`
  width: 88px;
  height: 33px;
  border: 0;
  background: #444;
  color: #fff;
`;

const Agree = styled.label`
  display: flex;
  align-items: flex-start;
  gap: 5px;
  margin: 0 0 14px 4px;
  font-size: 13px;
  line-height: 16px;
  color: #fff;
  white-space: nowrap;

  input {
    appearance: none;
    flex-shrink: 0;
    width: 13px;
    height: 13px;
    margin: 3px 0 0;
    border: 1px solid #b5b5b5;
    border-radius: 2px;
    background: linear-gradient(#eee, #d8d8d8);
  }
`;

const LiveCards = styled.div`
  display: grid;
  gap: 10px;
  padding-right: 5px;
`;

const LiveCard = styled.section`
  min-height: 92px;
  padding: 15px 15px 11px;
  border: 3px solid #636363;
  border-radius: 3px;
  background: #575757;
`;

const Stars = styled.p`
  height: 18px;
  font-size: 24px;
  line-height: 22px;
  font-weight: bold;
  color: #66ffb8;
`;

const LiveUpdate = styled.p`
  display: flex;
  align-items: center;
  gap: 4px;
  margin-top: ${(props) => (props.$tight ? '4px' : '8px')};
  font-size: 12px;
  line-height: 16px;
  font-weight: bold;
  color: #aaa;
`;

const LaunchTitle = styled(PanelTitle)`
  font-size: 16px;
  color: #66ffb8;
`;

const Scrollbar = styled.div`
  display: flex;
  flex-direction: column;
  align-items: center;
  justify-content: space-between;
  width: 17px;
  padding: 7px 0 8px;
  background: #f1f1f1;
`;

const ScrollArrow = styled.i`
  border: solid transparent;
  border-width: ${(props) => (props.$down ? '4px 4px 0' : '0 4px 4px')};
  border-top-color: ${(props) => (props.$down ? '#505050' : 'transparent')};
  border-bottom-color: ${(props) => (props.$down ? 'transparent' : '#505050')};
`;

const ScrollThumb = styled.div`
  width: 13px;
  height: 161px;
  margin-bottom: 214px;
  background: #c1c1c1;
`;

const DownloadBar = styled.div`
  position: absolute;
  left: 0;
  top: 374px;
  display: flex;
  align-items: center;
  height: 26px;
`;

const BarClose = styled.button`
  width: 11px;
`;

const Quality = styled.div`
  position: relative;
  width: 171px;
  height: 26px;
  border: 1px solid #5bbb4c;

  select {
    appearance: none;
    width: 100%;
    height: 100%;
    padding: 0 5px;
    border: 0;
    background: #d6eed3;
    font: 14px 'Liberation Sans', sans-serif;
    color: #777;
  }

  svg {
    position: absolute;
    right: 6px;
    top: 9px;
  }
`;

const DownloadButton = styled.button`
  display: flex;
  align-items: center;
  gap: 9px;
  width: 109px;
  height: 26px;
  padding-left: 6px;
  border: 1px solid #74c968;
  background: #5bbb4c;
  font-size: 12px;
  color: #fff;
`;

const HelpButton = styled.button`
  position: absolute;
  right: 39px;
  bottom: 12px;
  display: flex;
  align-items: center;
  gap: 8px;
  width: 133px;
  height: 44px;
  padding-left: 22px;
  border-radius: 22px;
  background: #8fb800;
  font: bold 14px 'DejaVu Sans', sans-serif;
  color: #fff;
`;

const Shield = styled.div`
  position: absolute;
  right: 17px;
  bottom: 0;
  display: flex;
  align-items: center;
  justify-content: center;
  width: 36px;
  height: 40px;
  background: #ccc;
`;

const Toast = styled.aside`
  position: absolute;
  right: 10px;
  bottom: 10px;
  width: 351px;
  height: 113px;
  padding: 8px 7px;
  border: 1px solid #ddd;
  background: rgba(255, 255, 255, 0.9);
  box-shadow: 0 0 6px rgba(0, 0, 0, 0.7);
  font-family: ${uiFont};
  color: #222;
`;

const ToastTitle = styled.h2`
  font-size: 12px;
  line-height: 16px;
  font-weight: bold;
`;

const ToastBody = styled.div`
  display: flex;
  gap: 7px;
`;

const ToastText = styled.div`
  display: flex;
  flex-direction: column;
  justify-content: space-between;
  padding: 4px 0 2px;
  font-size: 12px;
  line-height: 16px;
  white-space: nowrap;

  small {
    font-size: 10px;
    color: #555;
  }
`;

const ToastClose = styled.button`
  position: absolute;
  right: 7px;
  top: 8px;
`;

const ToastSettings = styled.button`
  position: absolute;
  right: 7px;
  bottom: 7px;
`;

const TaskbarRow = styled.footer`
  display: flex;
  align-items: center;
  height: 40px;
  border-top: 1px solid #3c5068;
  background: linear-gradient(to right, #8296ad 0, #8799b0 40px, #a6bfdd 110px, #a6bfdd 72%, #8ba2bd 84%, #7c93af);
  box-shadow: inset 0 1px 0 #cfdcea;
`;

const TaskButton = styled.button`
  display: flex;
  align-items: center;
  justify-content: center;
  width: ${(props) => props.$w}px;
  height: 38px;
  margin-left: ${(props) => (props.$gap ? '2px' : '0')};
  border: ${(props) => (props.$open ? '1px solid #4b5b70' : '0')};
  border-radius: 3px;
  background: ${(props) =>
    props.$open === 'active' ? 'linear-gradient(#fff, #dfe8f2)' : props.$open ? 'linear-gradient(135deg, #dfe7f1, #b3c6df)' : 'none'};
`;

const Tray = styled.div`
  display: flex;
  align-items: center;
  height: 39px;
  margin-left: auto;
  font: 12px ${uiFont};
  color: #fff;
`;

const TrayIcons = styled.div`
  display: flex;
  gap: 8px;
  margin: 0 16px;
`;

const DateTime = styled.div`
  display: flex;
  flex-direction: column;
  align-items: center;
  line-height: 17px;
`;

const ShowDesktop = styled.button`
  width: 14px;
  height: 39px;
  margin-left: 12px;
  border: 1px solid #5b6f88;
  background: linear-gradient(#c3d0df, #7f95ae);
`;
